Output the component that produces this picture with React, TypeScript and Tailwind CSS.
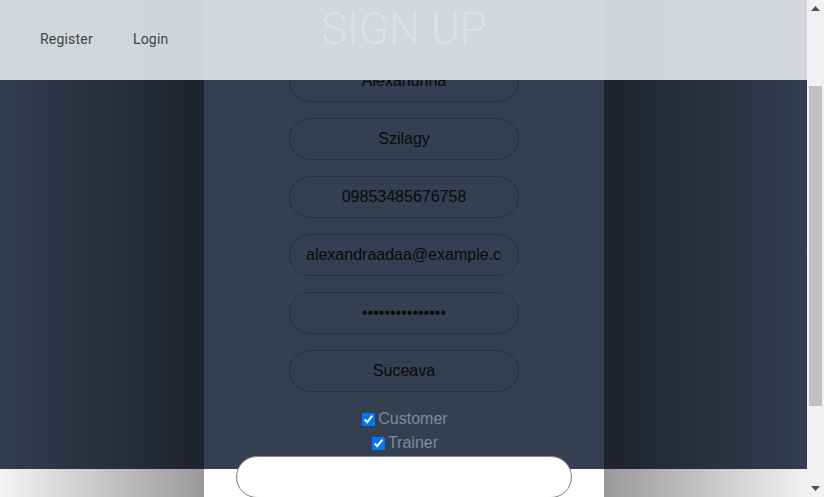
import React from "react";

const fields = [
  { v: "Alexandrina", t: "text" },
  { v: "Szilagy", t: "text" },
  { v: "09853485676758", t: "text" },
  { v: "alexandraadaa@example.com", t: "text" },
  { v: "passwordpasswor", t: "password" },
  { v: "Suceava", t: "text" },
];

export default function App() {
  return (
    <div className="w-[824px] h-[497px] overflow-hidden flex flex-row" style={{ fontFamily: "Arial, 'Liberation Sans', sans-serif" }}>
      <div className="relative w-[807px] h-full flex flex-row">
        <div className="w-[204px] flex flex-col">
          <div className="h-[469px] bg-[linear-gradient(to_right,#323d4f,#1e232c)]" />
          <div className="flex-1 bg-[linear-gradient(to_right,#f4f4f4,#999999)]" />
        </div>
        <div className="w-[400px] flex flex-col items-center bg-[linear-gradient(to_bottom,#353f52_469px,#ffffff_469px)]">
          <h1 className="h-[58px] flex items-center justify-center text-[44px] text-white font-light" style={{ fontFamily: "Roboto, sans-serif" }}>
            SIGN UP
          </h1>
          <div className="mt-[2px] flex flex-col gap-4 items-center">
            {fields.map((f, i) => (
              <input
                key={i}
                type={f.t}
                readOnly
                value={f.v}
                className="w-[230px] h-[42px] rounded-full border border-[#283040] bg-transparent px-4 text-center text-[16px] text-[#0a0a0a] outline-none"
                style={{ fontFamily: "Arial, 'Liberation Sans', sans-serif" }}
              />
            ))}
          </div>
          <div className="mt-[15px] flex flex-col items-center text-[16px] leading-6 text-[#7d8aa0]">
            <label className="flex items-center">
              <input type="checkbox" defaultChecked className="w-[13px] h-[13px] mr-[3px] ml-[2px] accent-[#0075ff]" />
              Customer
            </label>
            <label className="flex items-center">
              <input type="checkbox" defaultChecked className="w-[13px] h-[13px] mr-[3px] ml-[2px] accent-[#0075ff]" />
              Trainer
            </label>
          </div>
          <button className="mt-px w-[336px] h-[42px] shrink-0 rounded-full border border-[#80848c] bg-white" />
        </div>
        <div className="flex-1 flex flex-col">
          <div className="h-[469px] bg-[linear-gradient(to_right,#1e232c,#323d4f)]" />
          <div className="flex-1 bg-[linear-gradient(to_right,#999999,#f2f2f2)]" />
        </div>
        <header className="absolute top-0 left-0 w-[807px] h-[80px] bg-[rgba(218,223,226,0.95)] flex items-center pb-[2px] pl-5 text-[14px] text-[#444]" style={{ fontFamily: "Roboto, sans-serif" }}>
          <a className="px-5 tracking-[0.2px]">Register</a>
          <a className="px-5 tracking-[0.2px]">Login</a>
        </header>
      </div>
      <div className="w-[17px] h-full bg-[#f1f1f1] flex flex-col items-center">
        <div className="h-[17px] w-full flex items-center justify-center">
          <svg width="9" height="5" viewBox="0 0 9 5"><path d="M0 5 L4.5 0 L9 5 Z" fill="#505050" /></svg>
        </div>
        <div className="mt-[69px] w-[13px] h-[320px] bg-[#c1c1c1]" />
        <div className="flex-1" />
        <div className="h-[17px] w-full flex items-center justify-center">
          <svg width="9" height="5" viewBox="0 0 9 5"><path d="M0 0 L4.5 5 L9 0 Z" fill="#505050" /></svg>
        </div>
      </div>
    </div>
  );
}
